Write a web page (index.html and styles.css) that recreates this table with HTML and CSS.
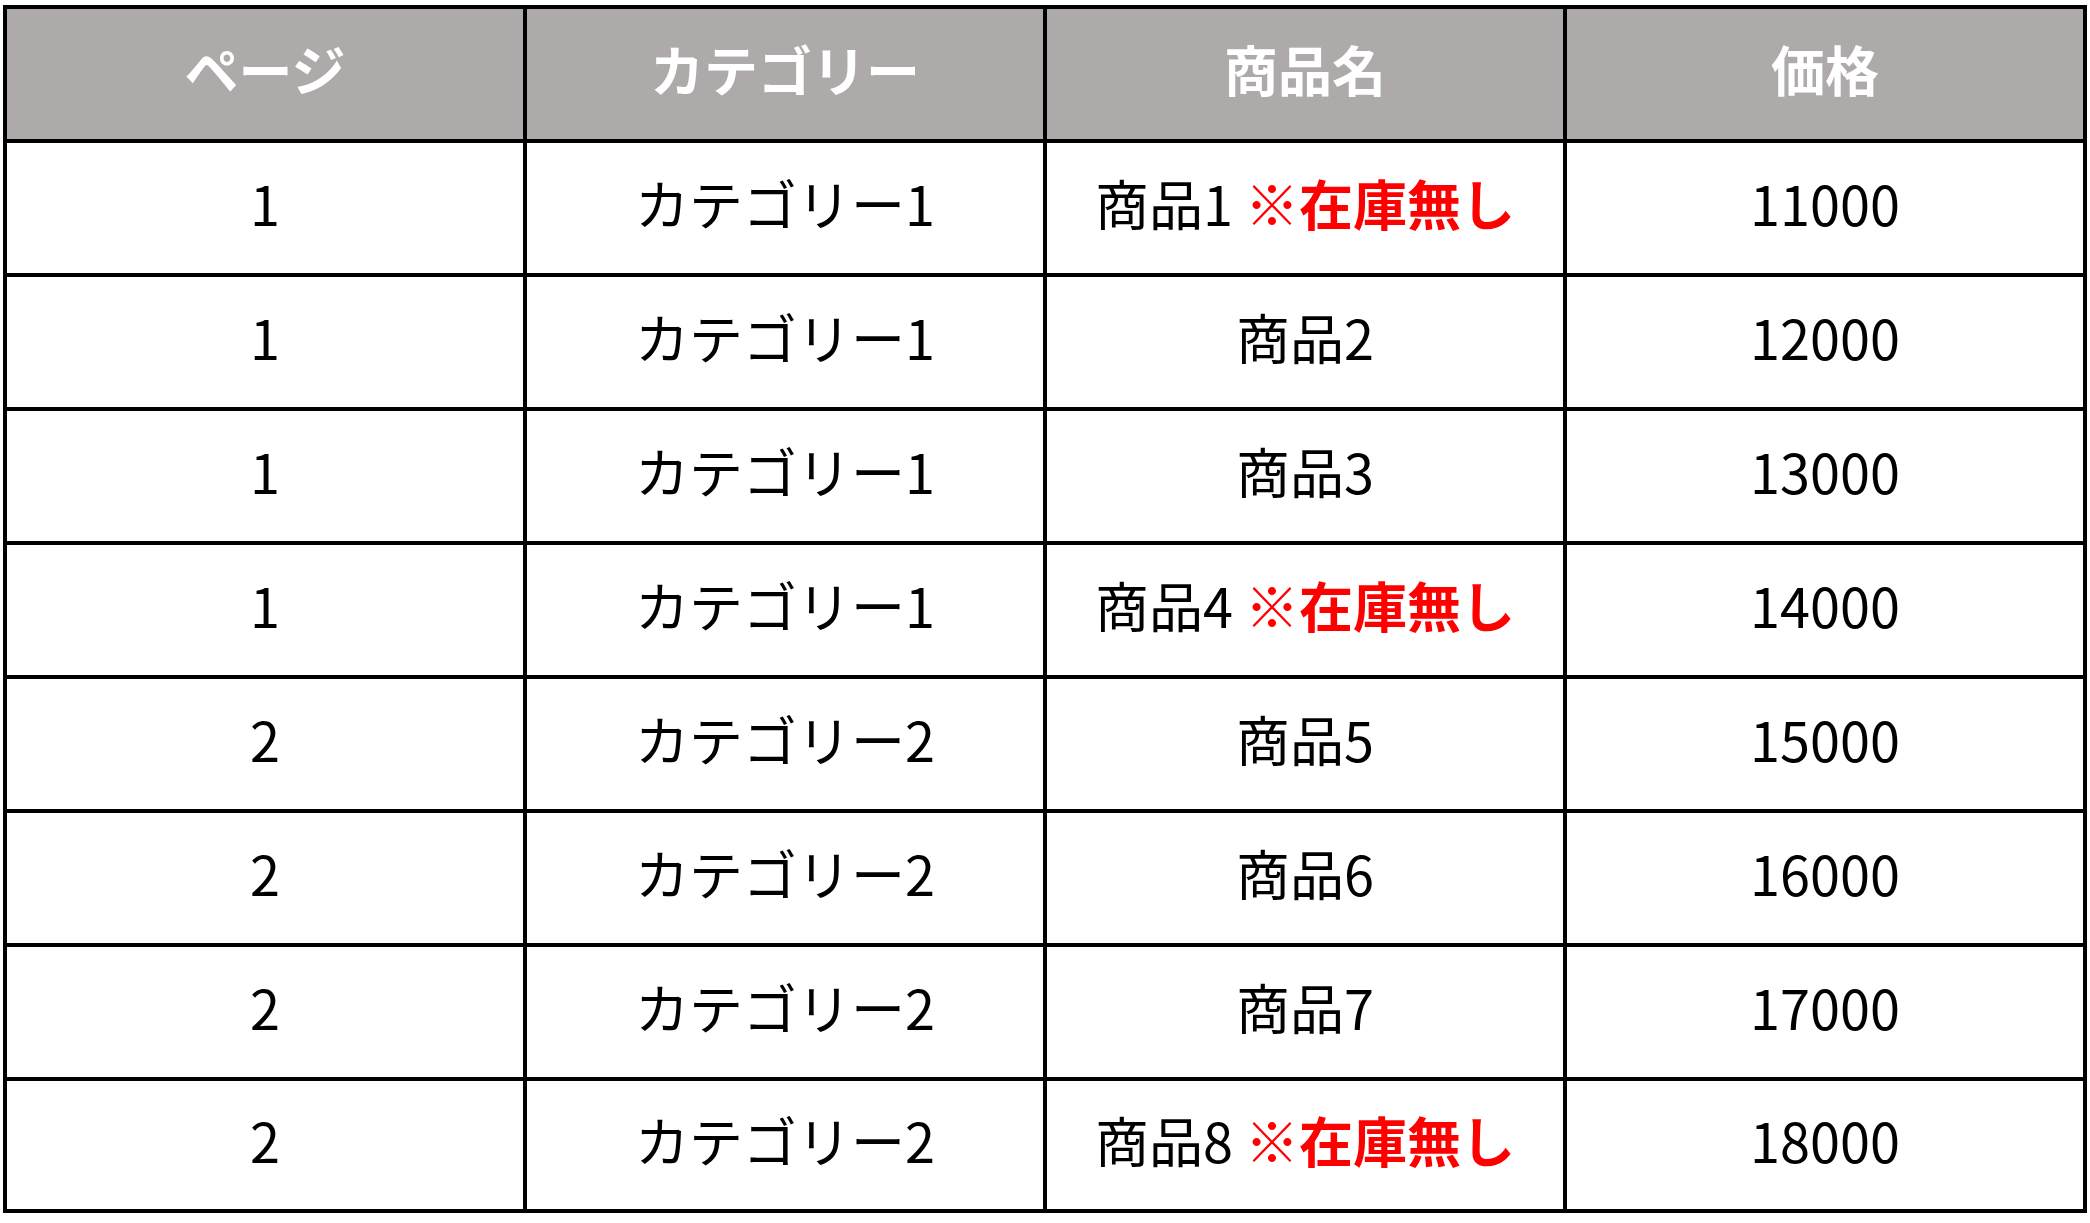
FILE: index.html
```html
<!DOCTYPE html>
<html lang="ja">
<head>
<meta charset="utf-8">
<title>商品一覧</title>
<link rel="stylesheet" href="styles.css">
</head>
<body>
<div class="page">
  <div class="grid">
    <div class="cell head">ページ</div>
    <div class="cell head">カテゴリー</div>
    <div class="cell head">商品名</div>
    <div class="cell head">価格</div>

    <div class="cell">1</div>
    <div class="cell">カテゴリー1</div>
    <div class="cell">商品1 <span class="out">※在庫無し</span></div>
    <div class="cell">11000</div>

    <div class="cell">1</div>
    <div class="cell">カテゴリー1</div>
    <div class="cell">商品2</div>
    <div class="cell">12000</div>

    <div class="cell">1</div>
    <div class="cell">カテゴリー1</div>
    <div class="cell">商品3</div>
    <div class="cell">13000</div>

    <div class="cell">1</div>
    <div class="cell">カテゴリー1</div>
    <div class="cell">商品4 <span class="out">※在庫無し</span></div>
    <div class="cell">14000</div>

    <div class="cell">2</div>
    <div class="cell">カテゴリー2</div>
    <div class="cell">商品5</div>
    <div class="cell">15000</div>

    <div class="cell">2</div>
    <div class="cell">カテゴリー2</div>
    <div class="cell">商品6</div>
    <div class="cell">16000</div>

    <div class="cell">2</div>
    <div class="cell">カテゴリー2</div>
    <div class="cell">商品7</div>
    <div class="cell">17000</div>

    <div class="cell">2</div>
    <div class="cell">カテゴリー2</div>
    <div class="cell">商品8 <span class="out">※在庫無し</span></div>
    <div class="cell">18000</div>
  </div>
</div>
</body>
</html>
```

FILE: styles.css
```css
html, body {
  margin: 0;
  padding: 0;
  background: #ffffff;
}

.page {
  padding: 5px 0 0 3px;
}

.grid {
  display: grid;
  width: max-content;
  grid-template-columns: repeat(4, 516px);
  grid-template-rows: repeat(8, 130px) 128px;
  gap: 4px;
  padding: 4px;
  background: #000000;
  font-family: "Noto Sans CJK JP", "Noto Sans", sans-serif;
  font-size: 54px;
  color: #000000;
}

.cell {
  background: #ffffff;
  display: flex;
  align-items: center;
  justify-content: center;
  white-space: pre;
  line-height: 1;
  padding-bottom: 10px;
}

.head {
  background: #aeaaaa;
  color: #ffffff;
  font-weight: 700;
}

.out {
  color: #ff0000;
  font-weight: 700;
}
```
